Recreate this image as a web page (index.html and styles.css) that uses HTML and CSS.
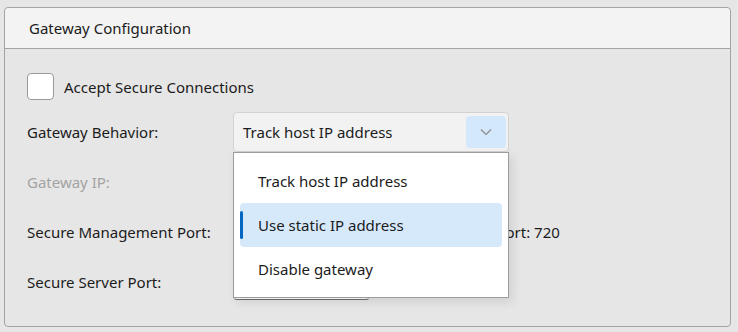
FILE: index.html
```html
<!DOCTYPE html>
<html>
<head>
<meta charset="utf-8">
<link rel="stylesheet" href="styles.css">
</head>
<body>
<div class="panel">
  <div class="panel-header">Gateway Configuration</div>
  <div class="panel-body">
    <label class="check-row">
      <span class="checkbox"></span>
      <span>Accept Secure Connections</span>
    </label>
    <div class="form">
      <div class="label">Gateway Behavior:</div>
      <div class="field">
        <div class="combo">
          <span class="combo-text">Track host IP address</span>
          <span class="combo-btn">
            <svg width="12" height="8" viewBox="0 0 12 8"><path d="M1 1.5 L6 6.5 L11 1.5" fill="none" stroke="#8a8a8a" stroke-width="1.2"/></svg>
          </span>
          <div class="dropdown">
            <div class="item">Track host IP address</div>
            <div class="item selected"><span class="bar"></span>Use static IP address</div>
            <div class="item">Disable gateway</div>
          </div>
        </div>
      </div>

      <div class="label disabled">Gateway IP:</div>
      <div class="field"><div class="input wide"></div></div>

      <div class="label">Secure Management Port:</div>
      <div class="field"><div class="input"></div><span class="hint">Default Port: 720</span></div>

      <div class="label">Secure Server Port:</div>
      <div class="field"><div class="input"></div></div>
    </div>
  </div>
</div>
</body>
</html>
```
FILE: styles.css
```css
* { box-sizing: border-box; }
html, body { margin: 0; }
body {
  background: #e6e6e6;
  font-family: "Noto Sans", "Open Sans", sans-serif;
  font-size: 15px;
  color: #1b1b1b;
  width: 738px;
  height: 332px;
  overflow: hidden;
}
.panel {
  margin: 7px 7px 0 4px;
  height: 320px;
  border: 1px solid #a3a3a3;
  border-radius: 4px;
  background: #e6e6e6;
}
.panel-header {
  height: 41px;
  background: #f3f3f3;
  border-bottom: 1px solid #a3a3a3;
  border-radius: 4px 4px 0 0;
  padding-left: 24px;
  display: flex;
  align-items: center;
}
.panel-body {
  padding: 24px 22px 0 22px;
}
.check-row {
  display: flex;
  align-items: center;
  gap: 10px;
  height: 27px;
}
.checkbox {
  width: 27px;
  height: 27px;
  background: #fff;
  border: 1px solid #9a9a9a;
  border-radius: 4px;
}
.form {
  margin-top: 12px;
  display: grid;
  grid-template-columns: 206px 1fr;
  grid-auto-rows: 40px;
  row-gap: 10px;
}
.label {
  display: flex;
  align-items: center;
}
.label.disabled { color: #a3a3a3; }
.field {
  display: flex;
  align-items: center;
  position: relative;
}
.combo {
  position: relative;
  width: 276px;
  height: 40px;
  background: #f2f2f2;
  border: 1px solid #d2d2d2;
  border-radius: 4px;
  display: flex;
  align-items: center;
  padding-left: 9px;
}
.combo-text { flex: 1; }
.combo-btn {
  width: 40px;
  height: 32px;
  margin-right: 2px;
  background: #d4e8fb;
  border-radius: 4px;
  display: flex;
  align-items: center;
  justify-content: center;
}
.dropdown {
  position: absolute;
  left: -1px;
  top: 39px;
  width: 276px;
  height: 146px;
  background: #fff;
  border: 1px solid #9c9c9c;
  box-shadow: 3px 4px 10px rgba(0,0,0,0.10);
  padding: 6px;
  z-index: 10;
}
.item {
  position: relative;
  height: 44px;
  display: flex;
  align-items: center;
  padding-left: 18px;
  border-radius: 4px;
}
.item.selected { background: #d6e9fb; }
.bar {
  position: absolute;
  left: 0;
  top: 8px;
  width: 3px;
  height: 28px;
  border-radius: 2px;
  background: #0067c0;
}
.input {
  width: 137px;
  height: 38px;
  background: #fff;
  border: 1px solid #c8c8c8;
  border-bottom: 1px solid #6e6e6e;
  border-radius: 4px;
  align-self: flex-start;
}
.input.wide { width: 200px; }
.hint { margin-left: 71px; }
```
